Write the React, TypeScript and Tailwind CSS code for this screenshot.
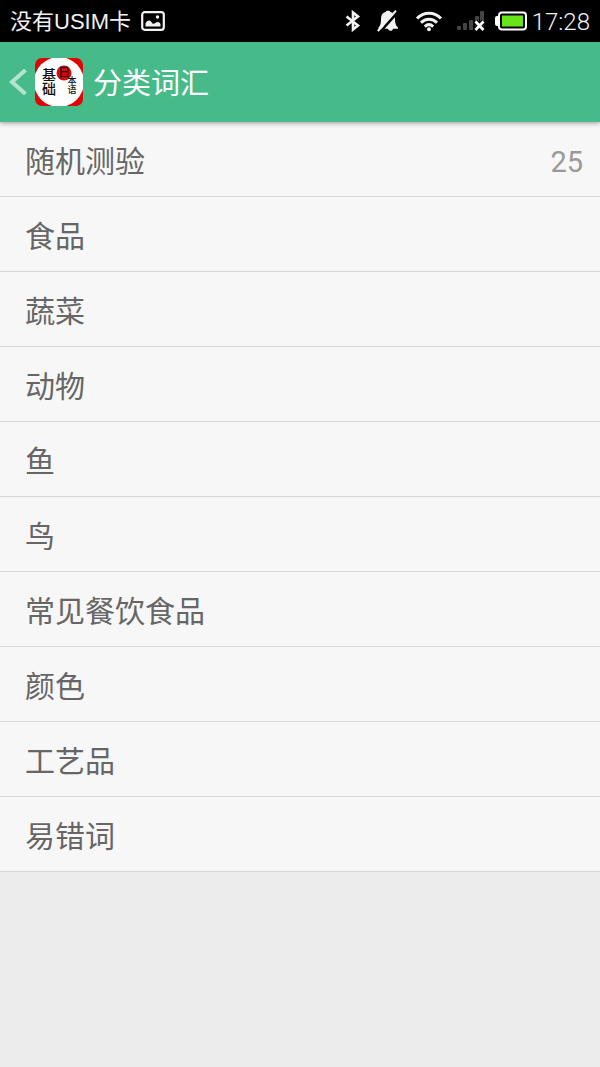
import type { ReactNode } from "react";

type Category = {
  name: string;
  count?: number;
};

const categories: Category[] = [
  { name: "随机测验", count: 25 },
  { name: "食品" },
  { name: "蔬菜" },
  { name: "动物" },
  { name: "鱼" },
  { name: "鸟" },
  { name: "常见餐饮食品" },
  { name: "颜色" },
  { name: "工艺品" },
  { name: "易错词" },
];

const PictureIcon = () => (
  <svg width="24" height="20" viewBox="0 0 24 20" fill="none">
    <rect x="1.2" y="1.2" width="21.6" height="17.6" rx="2.5" stroke="#f2f2f2" strokeWidth="2.2" />
    <path d="M4.500 15.500V12.500c1-2.500 4-4 5.500-2l1.500 2c1 .8 2 .2 3-.8 2-1.500 4.500-.5 5 1.500v2.300z" fill="#f2f2f2" />
    <circle cx="16.500" cy="6" r="1.700" fill="#f2f2f2" />
  </svg>
);

const BluetoothIcon = () => (
  <svg width="16" height="22" viewBox="0 0 16 22" fill="none" stroke="#f2f2f2" strokeWidth="2.600">
    <path d="M1.500 6.500l11.500 9L8 19.500V2.500l5 4-11.500 9" />
  </svg>
);

const MutedIcon = () => (
  <svg width="22" height="22" viewBox="0 0 22 22">
    <path
      d="M11 .8c1.300 0 2.200.5 2.400 1.200C16.500 2.600 18 5 18 9c0 4 .8 6.500 3 8.500v1.300h-5c-.5 2.700-4 2.700-5 0H1.500v-1.300C3.500 15.500 4 13 4 9c0-4 1.500-6.400 4.600-7C8.800 1.300 9.700.8 11 .8z"
      fill="#f2f2f2"
    />
    <path d="M3 22L21 2" stroke="#000" strokeWidth="2.600" />
    <path d="M.8 21L6 15.500M16 4l3-3.300" stroke="#f2f2f2" strokeWidth="2" />
  </svg>
);

const WifiIcon = () => (
  <svg width="28" height="22" viewBox="0 0 28 22" fill="none" stroke="#f2f2f2" strokeWidth="3">
    <path d="M2 8.500c6.500-7 17.500-7 24 0" />
    <path d="M6 12.700c4.500-4.600 11.500-4.600 16 0" />
    <path d="M9.800 16.600c2.600-2.400 5.800-2.400 8.400 0" />
    <circle cx="14" cy="19.300" r="2" fill="#f2f2f2" stroke="none" />
  </svg>
);

const SignalIcon = () => (
  <svg width="28" height="20" viewBox="0 0 28 20">
    <g fill="#444">
      <rect x="0" y="15" width="4" height="4" rx="1" />
      <rect x="6" y="12" width="4" height="7" rx="1" />
      <rect x="12" y="9" width="4" height="10" rx="1" />
      <rect x="18" y="5" width="4" height="14" rx="1" />
      <rect x="23" y="0" width="4" height="19" rx="1" />
    </g>
    <path d="M18.500 10.500l8 8.500M26.500 10.500l-8 8.500" stroke="#000" strokeWidth="5" />
    <path d="M18.500 10.500l8 8.500M26.500 10.500l-8 8.500" stroke="#fff" strokeWidth="2.800" />
  </svg>
);

const BatteryIcon = () => (
  <svg width="32" height="20" viewBox="0 0 32 20">
    <rect x="0" y="5" width="6" height="10" rx="2" fill="#fff" />
    <rect x="4" y="1.500" width="27" height="17" rx="3" fill="#000" stroke="#fff" strokeWidth="2" />
    <rect x="7" y="4.500" width="21" height="11" fill="#66e619" />
  </svg>
);

const AppLogo = () => (
  <svg
    width="48"
    height="48"
    viewBox="0 0 48 48"
    className="font-['Noto_Sans_CJK_SC',sans-serif] font-medium"
    aria-hidden="true"
  >
    <defs>
      <clipPath id="logo-shape">
        <rect width="48" height="48" rx="7" />
      </clipPath>
    </defs>
    <g clipPath="url(#logo-shape)">
      <rect width="48" height="48" fill="#e00505" />
      <circle cx="24" cy="24" r="25" fill="#fff" />
    </g>
    <circle cx="29" cy="15" r="7.500" fill="#e00505" />
    <g fill="#111">
      <text x="14" y="10" fontSize="14" className="[writing-mode:vertical-rl]">
        基础
      </text>
      <text x="23" y="19" fontSize="12">
        日
      </text>
      <text x="37" y="18" fontSize="9" className="[writing-mode:vertical-rl]">
        本语
      </text>
    </g>
  </svg>
);

const StatusBar = () => (
  <div className="flex h-[42px] items-center bg-black px-[10px] text-[#f2f2f2]">
    <span className="pt-[2px] font-['Liberation_Sans','Noto_Sans_CJK_SC',sans-serif] text-[22px] leading-none">
      没有USIM卡
    </span>
    <span className="ml-[10px]">
      <PictureIcon />
    </span>
    <div className="ml-auto flex items-center">
      <BluetoothIcon />
      <span className="ml-4">
        <MutedIcon />
      </span>
      <span className="ml-4">
        <WifiIcon />
      </span>
      <span className="ml-[14px]">
        <SignalIcon />
      </span>
      <span className="ml-[10px]">
        <BatteryIcon />
      </span>
      <span className="ml-[5px] pt-[2px] font-[Roboto,sans-serif] text-[24px] leading-none font-light">
        17:28
      </span>
    </div>
  </div>
);

const Header = () => (
  <header className="relative flex h-20 items-center bg-[#46bb89] pl-[9px] shadow-[0_1px_5px_rgba(0,0,0,0.4)]">
    <button type="button" aria-label="返回" className="flex items-center">
      <svg width="18" height="26" viewBox="0 0 18 26" fill="none">
        <path d="M16.500 1L3 13l13.500 12" stroke="#b5e3d0" strokeWidth="4" />
      </svg>
      <span className="ml-2">
        <AppLogo />
      </span>
    </button>
    <h1 className="ml-[10px] pt-1 text-[29px] leading-none text-white">分类词汇</h1>
  </header>
);

const Row = ({ children, count }: { children: ReactNode; count?: number }) => (
  <li className="border-b border-[#d8d8d8] bg-[#f7f7f7]">
    <button
      type="button"
      className="flex h-[74px] w-full items-center justify-between pt-[6px] pr-[17px] pl-[25px] text-left text-[30px] leading-none text-[#666]"
    >
      <span>{children}</span>
      {count !== undefined && (
        <span className="font-[Roboto,sans-serif] text-[29px] text-[#999]">{count}</span>
      )}
    </button>
  </li>
);

export default function App() {
  return (
    <div className="min-h-screen bg-[#ececec] font-[Roboto,'Noto_Sans_CJK_SC',sans-serif]">
      <StatusBar />
      <Header />
      <main>
        <ul>
          {categories.map(({ name, count }) => (
            <Row key={name} count={count}>
              {name}
            </Row>
          ))}
        </ul>
      </main>
    </div>
  );
}
